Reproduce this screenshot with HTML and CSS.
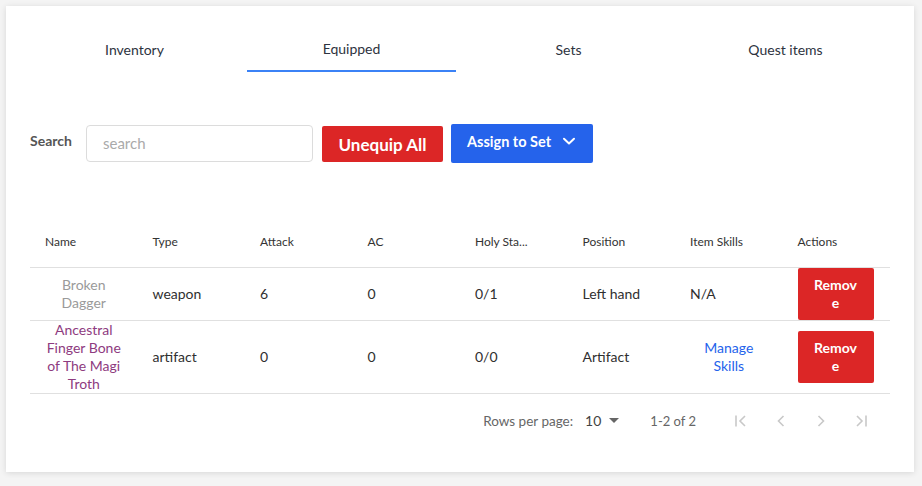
FILE: index.html
```html
<!DOCTYPE html>
<html lang="en">
<head>
<meta charset="utf-8">
<title>Equipped</title>
<link rel="stylesheet" href="styles.css">
</head>
<body>
<div class="card">
  <nav class="tabs">
    <div class="tab">Inventory</div>
    <div class="tab active">Equipped</div>
    <div class="tab">Sets</div>
    <div class="tab">Quest items</div>
  </nav>

  <div class="toolbar">
    <label class="search-label" for="search">Search</label>
    <input id="search" class="search-input" type="text" placeholder="search">
    <button class="btn btn-red">Unequip All</button>
    <button class="btn btn-blue">Assign to Set
      <svg class="chev" width="14" height="14" viewBox="0 0 14 14"><path d="M2 4.8 L7 9.4 L12 4.8" fill="none" stroke="#fff" stroke-width="2" stroke-linecap="round" stroke-linejoin="round"/></svg>
    </button>
  </div>

  <table class="grid">
    <thead>
      <tr>
        <th>Name</th><th>Type</th><th>Attack</th><th>AC</th><th>Holy Sta...</th><th>Position</th><th>Item Skills</th><th>Actions</th>
      </tr>
    </thead>
    <tbody>
      <tr class="r1">
        <td class="name grey">Broken Dagger</td>
        <td>weapon</td><td>6</td><td>0</td><td>0/1</td><td>Left hand</td><td>N/A</td>
        <td class="act"><button class="remove">Remove</button></td>
      </tr>
      <tr class="r2">
        <td class="name purple">Ancestral Finger Bone of The Magi Troth</td>
        <td>artifact</td><td>0</td><td>0</td><td>0/0</td><td>Artifact</td>
        <td class="skills"><a class="link">Manage Skills</a></td>
        <td class="act"><button class="remove">Remove</button></td>
      </tr>
    </tbody>
  </table>

  <div class="pager">
    <span class="rpp">Rows per page:</span>
    <span class="rpp-val">10</span>
    <svg class="caret" width="10" height="6" viewBox="0 0 10 6"><path d="M0 0 L10 0 L5 5 Z" fill="#666"/></svg>
    <span class="range">1-2 of 2</span>
    <div class="nav">
      <svg width="18" height="18" viewBox="0 0 18 18"><path d="M4 3.5 V14.5" stroke="#c8c8c8" stroke-width="1.6" fill="none"/><path d="M13 4 L8 9 L13 14" stroke="#c8c8c8" stroke-width="1.6" fill="none"/></svg>
      <svg width="18" height="18" viewBox="0 0 18 18"><path d="M11.5 4 L6.5 9 L11.5 14" stroke="#c8c8c8" stroke-width="1.6" fill="none"/></svg>
      <svg width="18" height="18" viewBox="0 0 18 18"><path d="M6.5 4 L11.5 9 L6.5 14" stroke="#c8c8c8" stroke-width="1.6" fill="none"/></svg>
      <svg width="18" height="18" viewBox="0 0 18 18"><path d="M5 4 L10 9 L5 14" stroke="#c8c8c8" stroke-width="1.6" fill="none"/><path d="M14 3.5 V14.5" stroke="#c8c8c8" stroke-width="1.6" fill="none"/></svg>
    </div>
  </div>
</div>
</body>
</html>
```

FILE: styles.css
```css
* { box-sizing: border-box; }

body {
  margin: 0;
  padding: 6px;
  background: #f4f4f4;
  font-family: Lato, "Noto Sans", sans-serif;
  color: #333;
}

.card {
  width: 908px;
  height: 466px;
  background: #fff;
  box-shadow: 0 1px 6px rgba(0,0,0,0.12);
  padding: 22px 20px 0 20px;
}

.tabs {
  display: grid;
  grid-template-columns: repeat(4, 217px);
}

.tab {
  height: 44px;
  display: flex;
  align-items: center;
  justify-content: center;
  font-size: 14px;
  color: #2d3340;
  margin: 0 4px;
  border-bottom: 2px solid transparent;
}

.tab.active {
  border-bottom-color: #3b82f6;
  padding-bottom: 2px;
}

.toolbar {
  display: flex;
  align-items: center;
  margin-top: 52px;
  padding-left: 4px;
  height: 40px;
}

.search-label {
  width: 44px;
  font-size: 14px;
  font-weight: 700;
  color: #555;
  margin-right: 12px;
  margin-bottom: 8px;
}

.search-input {
  width: 227px;
  height: 37px;
  margin-top: -2px;
  border: 1px solid #dcdcdc;
  border-radius: 4px;
  padding: 0 16px;
  font-family: inherit;
  font-size: 15px;
  color: #333;
  margin-right: 9px;
}
.search-input::placeholder { color: #aaa; }

.btn {
  border: 0;
  border-radius: 2px;
  color: #fff;
  font-family: inherit;
  display: flex;
  align-items: center;
}

.btn-red {
  width: 121px;
  height: 36px;
  background: #dc2626;
  font-size: 17px;
  font-weight: 700;
  margin-right: 8px;
  justify-content: center;
}

.btn-blue {
  width: 142px;
  height: 39px;
  background: #2563eb;
  font-size: 14.5px;
  font-weight: 700;
  gap: 11px;
  padding: 0 0 4px 16px;
  margin-top: -2px;
}

.grid {
  margin-top: 53px;
  margin-left: 4px;
  width: 860px;
  border-collapse: collapse;
  table-layout: fixed;
  font-size: 14px;
}

.grid th {
  height: 50px;
  text-align: left;
  font-weight: 400;
  font-size: 12px;
  color: #333;
  padding: 0 15px;
  border-bottom: 1px solid #e0e0e0;
}

.grid td {
  padding: 0 15px;
  border-bottom: 1px solid #e0e0e0;
  color: #2f2f2f;
  line-height: 18px;
}

.grid .r1 td { height: 53px; }
.grid .r2 td { height: 73px; }

.grid td.name { text-align: center; }
.grey { color: #9a9a9a !important; }
.purple { color: #8e3b80 !important; }

.grid td.skills { text-align: center; }
.link { color: #2563eb; }

.grid td.act { padding: 0 15px 0 15px; vertical-align: top; }
.r2 td.act { padding-top: 10px; }

.remove {
  width: 76px;
  height: 52px;
  border: 0;
  border-radius: 2px;
  background: #dc2626;
  color: #fff;
  font-family: inherit;
  font-size: 14px;
  font-weight: 700;
  padding: 0 15px;
  word-break: break-all;
  line-height: 18px;
}

.pager {
  display: flex;
  align-items: center;
  justify-content: flex-end;
  margin-top: 17px;
  padding-right: 24px;
  height: 20px;
  font-size: 13px;
  color: #666;
}

.rpp { margin-right: 12px; font-size: 13.5px; }
.rpp-val { margin-right: 8px; color: #444; font-size: 14px; }
.caret { margin-right: 31px; }
.range { margin-right: 36px; }

.nav {
  display: flex;
  gap: 22px;
}
```
